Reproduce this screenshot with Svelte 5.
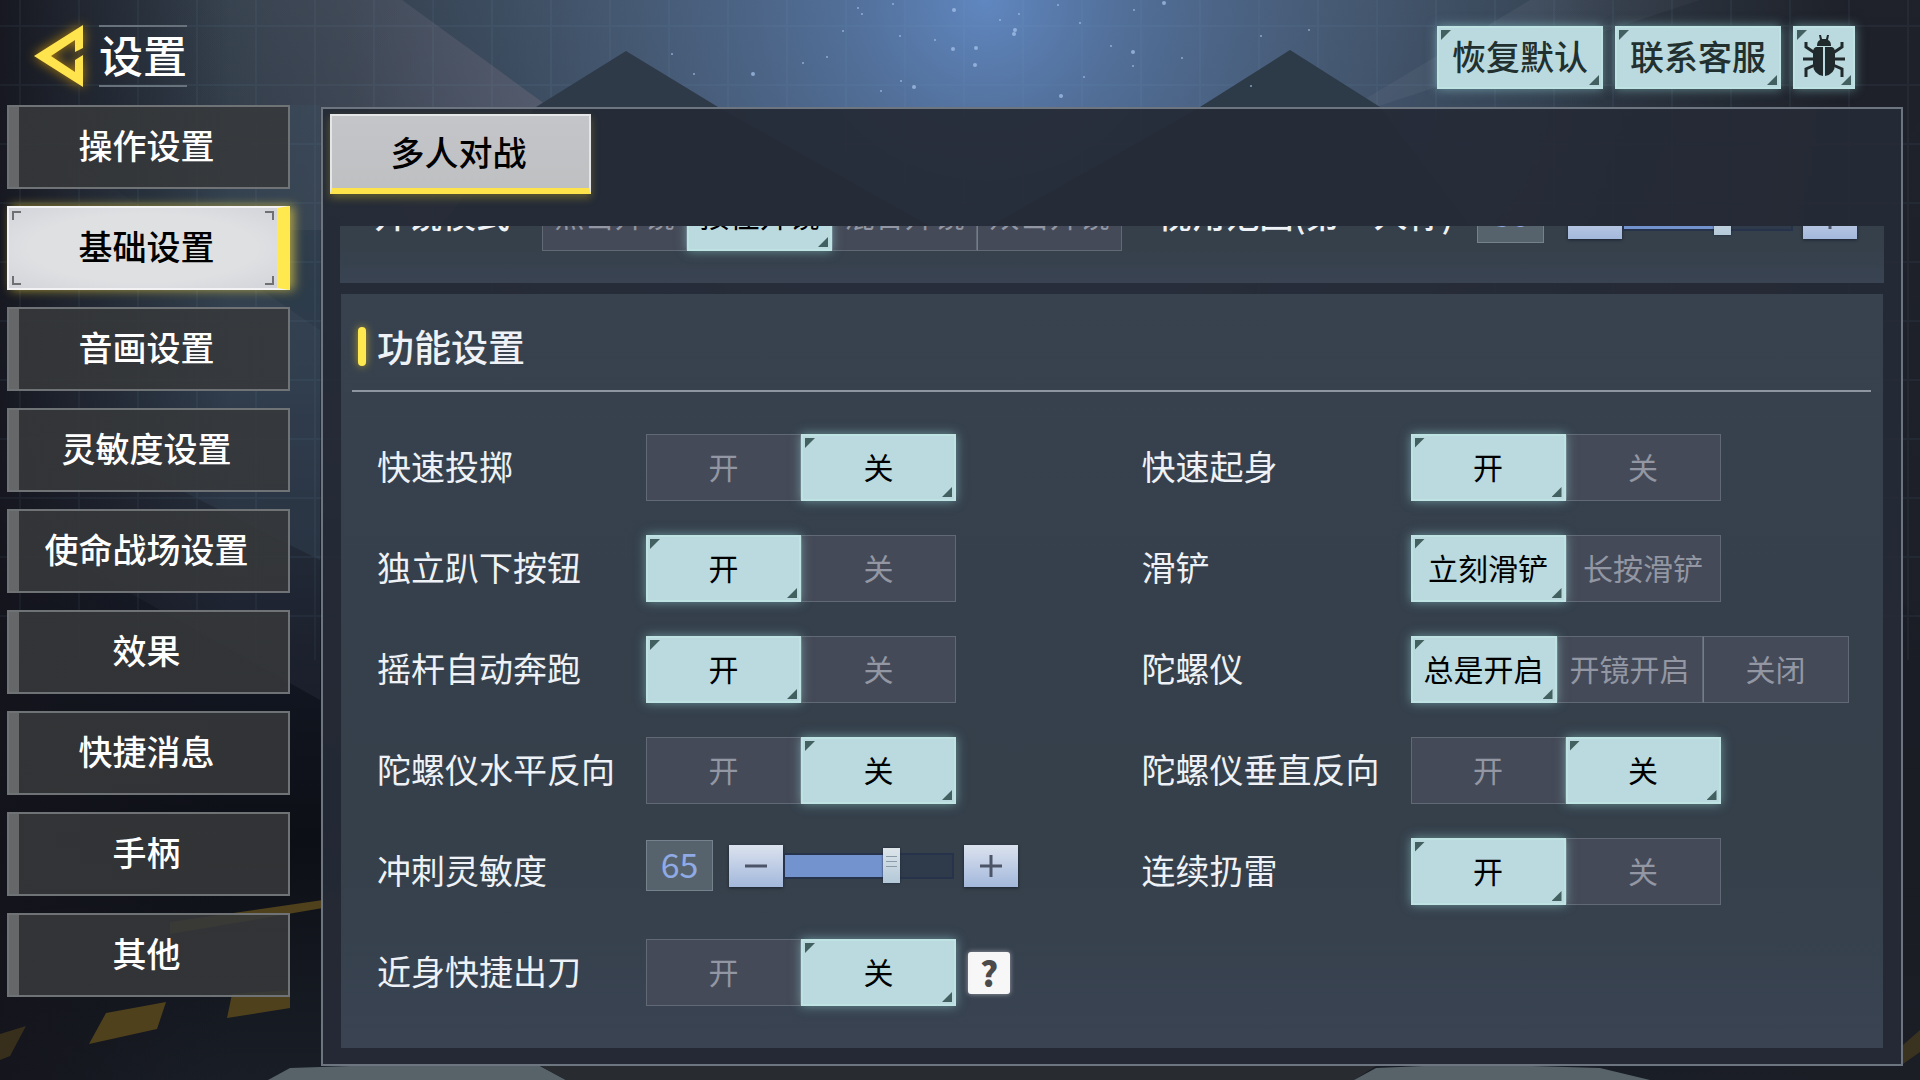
<script>
  const menu = [
    "操作设置",
    "基础设置",
    "音画设置",
    "灵敏度设置",
    "使命战场设置",
    "效果",
    "快捷消息",
    "手柄",
    "其他",
  ];
  let page = $state("基础设置");

  let scope = $state([
    {
      id: "ads-mode",
      label: "开镜模式",
      options: ["点击开镜", "按住开镜", "混合开镜", "双击开镜"],
      value: "按住开镜",
    },
    { id: "fov", label: "视角范围(第一人称)", min: 50, max: 100, value: 80 },
  ]);

  const onOff = ["开", "关"];
  let features = $state([
    { id: "throw", label: "快速投掷", options: onOff, value: "关" },
    { id: "getup", label: "快速起身", options: onOff, value: "开" },
    { id: "prone", label: "独立趴下按钮", options: onOff, value: "开" },
    {
      id: "slide",
      label: "滑铲",
      options: ["立刻滑铲", "长按滑铲"],
      value: "立刻滑铲",
    },
    { id: "autorun", label: "摇杆自动奔跑", options: onOff, value: "开" },
    {
      id: "gyro",
      label: "陀螺仪",
      options: ["总是开启", "开镜开启", "关闭"],
      value: "总是开启",
    },
    { id: "gyro-x", label: "陀螺仪水平反向", options: onOff, value: "关" },
    { id: "gyro-y", label: "陀螺仪垂直反向", options: onOff, value: "关" },
    { id: "sprint", label: "冲刺灵敏度", min: 0, max: 100, value: 65 },
    { id: "grenade", label: "连续扔雷", options: onOff, value: "开" },
    {
      id: "knife",
      label: "近身快捷出刀",
      options: onOff,
      value: "关",
      help: true,
    },
  ]);

  function step(s, d) {
    s.value = Math.min(s.max, Math.max(s.min, s.value + d));
  }

  function ratio(s) {
    return (s.value - s.min) / (s.max - s.min);
  }

  // x, y, radius
  const stars = [
    [954, 10, 2], [862, 14, 1], [900, 36, 1], [1015, 30, 2], [1058, 5, 1],
    [935, 40, 1], [976, 48, 2], [953, 49, 2], [975, 65, 2], [1133, 52, 2],
    [1164, 3, 2], [753, 74, 2], [694, 74, 1], [803, 63, 1], [914, 87, 2],
    [881, 91, 1], [901, 81, 1], [1061, 96, 2], [1014, 34, 2], [1080, 23, 1],
    [1133, 66, 1], [1182, 58, 1], [1251, 86, 1], [1309, 30, 1], [843, 31, 1],
    [827, 57, 1], [893, 4, 1], [1019, 14, 1], [1134, 10, 1], [672, 54, 1],
    [1261, 36, 1], [1084, 77, 1], [1111, 46, 1], [858, 8, 1], [1000, 20, 1],
  ];
  const columns = Array.from({ length: 33 }, (_, i) => 20 + i * 59);
  const lines = [26, 85, 144, 203, 262, 321, 380, 439, 498, 557, 616];
</script>

{#snippet choice(s)}
  <div
    class="choice"
    class:compact={s.options.length > 2}
    role="group"
    aria-labelledby={s.id}
  >
    {#each s.options as o}
      <button
        type="button"
        class:on={s.value === o}
        aria-pressed={s.value === o}
        onclick={() => (s.value = o)}>{o}</button
      >
    {/each}
  </div>
{/snippet}

{#snippet slider(s)}
  <div class="slider">
    <output for="{s.id}-range">{s.value}</output>
    <button type="button" class="step" aria-label="-" onclick={() => step(s, -1)}>
      <svg viewBox="0 0 24 24"><path d="M1 12H23" /></svg>
    </button>
    <input
      id="{s.id}-range"
      type="range"
      min={s.min}
      max={s.max}
      bind:value={s.value}
      aria-labelledby={s.id}
      style="--ratio: {ratio(s)}"
    />
    <button type="button" class="step" aria-label="+" onclick={() => step(s, 1)}>
      <svg viewBox="0 0 24 24"><path d="M1 12H23M12 1V23" /></svg>
    </button>
  </div>
{/snippet}

{#snippet setting(s)}
  <div class="setting" class:ranged={!s.options}>
    <label class="label" id={s.id} for={s.options ? null : `${s.id}-range`}>
      {s.label}
    </label>
    {#if s.options}
      {@render choice(s)}
    {:else}
      {@render slider(s)}
    {/if}
    {#if s.help}
      <button type="button" class="help">?</button>
    {/if}
  </div>
{/snippet}

<div class="screen">
  <svg
    class="backdrop"
    viewBox="0 0 1920 1080"
    preserveAspectRatio="xMidYMin slice"
    aria-hidden="true"
  >
    <defs>
      <linearGradient id="sky" x1="0" y1="0" x2="0" y2="1">
        <stop offset="0" stop-color="#34404d" />
        <stop offset="0.35" stop-color="#26313e" />
        <stop offset="0.6" stop-color="#121722" />
        <stop offset="0.78" stop-color="#0d0f16" />
        <stop offset="1" stop-color="#191e26" />
      </linearGradient>
      <linearGradient id="edges" x1="0" y1="0" x2="1" y2="0">
        <stop offset="0" stop-color="#14141c" stop-opacity="0.9" />
        <stop offset="0.12" stop-color="#14141c" stop-opacity="0" />
        <stop offset="0.8" stop-color="#1c1e26" stop-opacity="0" />
        <stop offset="0.96" stop-color="#1c1e26" stop-opacity="0.9" />
      </linearGradient>
      <linearGradient id="beam" x1="0.3" y1="0" x2="1" y2="0">
        <stop offset="0" stop-color="#6a6878" stop-opacity="0" />
        <stop offset="1" stop-color="#6a6878" stop-opacity="0.5" />
      </linearGradient>
      <radialGradient id="glow" cx="985" cy="0" r="640" gradientUnits="userSpaceOnUse">
        <stop offset="0" stop-color="#6087c0" />
        <stop offset="0.2" stop-color="#5676a4" stop-opacity="0.9" />
        <stop offset="0.6" stop-color="#4f6685" stop-opacity="0.6" />
        <stop offset="1" stop-color="#4b6280" stop-opacity="0" />
      </radialGradient>
    </defs>
    <rect width="1920" height="1080" fill="url(#sky)" />
    <rect width="1920" height="640" fill="url(#glow)" />
    <path d="M0 0H402L560 115V230H0Z" fill="url(#beam)" />
    <path d="M1530 0H1700L1376 107V230L1330 120Z" fill="#6a7488" opacity="0.2" />
    <path d="M0 190L140 105H320V560L0 400Z" fill="#3d5468" opacity="0.25" />
    <path d="M0 110L320 330V700L0 520Z" fill="#5a6170" opacity="0.15" />
    <path d="M1920 120V620L1860 560V200Z" fill="#3d5468" opacity="0.3" />
    <rect width="1920" height="1080" fill="url(#edges)" />
    <g class="mesh">
      {#each columns as x}
        <path d="M{x} 0V660" />
      {/each}
      {#each lines as y}
        <path d="M0 {y}H1920" />
      {/each}
    </g>
    <path d="M536 107L626 51L718 107L930 226H440Z" fill="#2f3a49" />
    <path d="M1200 107L1290 50L1380 107L1470 226H990Z" fill="#2d3a48" />
    {#each stars as [x, y, r]}
      <ellipse cx={x} cy={y} rx={r} ry={r} fill="#a9c6ee" opacity="0.7" />
    {/each}
    <g fill="#4f411c">
      <path d="M170 922L323 900V908L170 934Z" />
      <path d="M89 1044L106 1013L166 1002L157 1029Z" />
      <path d="M227 1018L232 994L290 990V1008Z" />
      <path d="M0 1060V1034L26 1026L10 1056Z" opacity="0.6" />
      <path d="M1903 1045L1920 1030V1052L1903 1064Z" opacity="0.6" />
    </g>
    <path d="M268 1080L290 1068L410 1064L540 1066L566 1080Z" fill="#576269" />
    <path d="M566 1080L540 1066H1376L1354 1080Z" fill="#282c30" />
    <path d="M1354 1080L1376 1068L1470 1064L1600 1068L1650 1080Z" fill="#576269" />
  </svg>

  <header>
    <a class="back" href="#back" aria-label="返回">
      <svg viewBox="0 0 49 62">
        <path d="M0 31L49 0V23L41 27V15L17 31L41 47V35L49 30V62Z" />
      </svg>
    </a>
    <h1>设置</h1>
    <div class="actions">
      <button type="button" class="on">恢复默认</button>
      <button type="button" class="on">联系客服</button>
      <button type="button" class="on bug" aria-label="反馈">
        <svg viewBox="0 0 42 42">
          <path
            d="M14 11Q14 6 17 5L16 0H18L19 4H23L24 0H26L25 5Q28 6 28 11Z"
          />
          <path d="M13 12H20V41Q10 39 10 29V17Q10 13 13 12Z" />
          <path d="M29 12H22V41Q32 39 32 29V17Q32 13 29 12Z" />
          <path
            class="legs"
            d="M3 7V12L12 18M39 7V12L30 18M0 24H12M30 24H42M12 30L3 34V42M30 30L39 34V42"
          />
        </svg>
      </button>
    </div>
  </header>

  <div class="body">
    <nav>
      {#each menu as item}
        <button
          type="button"
          class:active={page === item}
          onclick={() => (page = item)}>{item}</button
        >
      {/each}
    </nav>

    <main>
      <div class="tabs">
        <button type="button">多人对战</button>
      </div>
      <div class="scroller">
        <section class="card previous">
          <div class="settings">
            {#each scope as s}
              {@render setting(s)}
            {/each}
          </div>
        </section>
        <section class="card">
          <h2>功能设置</h2>
          <div class="settings">
            {#each features as s}
              {@render setting(s)}
            {/each}
          </div>
        </section>
      </div>
    </main>
  </div>
</div>

<style>
  :global(*, *::before, *::after) {
    box-sizing: border-box;
  }

  :global(body) {
    background: #14171f;
    color: #eef1f5;
    font-family: "Noto Sans CJK SC", sans-serif;
    font-size: 34px;
  }

  button {
    margin: 0;
    padding: 0 0 4px;
    border: none;
    border-radius: 0;
    color: inherit;
    font: inherit;
    line-height: 48px;
    white-space: nowrap;
    cursor: pointer;
  }

  .screen {
    position: relative;
    display: flex;
    flex-direction: column;
    min-height: 100vh;
    overflow: hidden;
  }

  .backdrop {
    position: absolute;
    inset: 0;
    z-index: -1;
    width: 100%;
    height: 100%;
  }

  .mesh {
    fill: none;
    stroke: #7fb0cc;
    stroke-width: 2;
    opacity: 0.06;
  }

  header {
    display: flex;
    align-items: center;
    height: 105px;
    padding: 6px 65px 0 34px;
  }

  .back svg {
    display: block;
    width: 49px;
    height: 62px;
    fill: #ffe44d;
    filter: drop-shadow(0 0 6px #b8860b);
  }

  h1 {
    margin: 0 0 0 16px;
    padding-bottom: 4px;
    border: solid #68727c;
    border-width: 2px 0;
    color: #fff;
    font-size: 44px;
    font-weight: 500;
    line-height: 54px;
  }

  .actions {
    display: flex;
    gap: 12px;
    margin-left: auto;
    padding-top: 4px;
  }

  .actions button {
    width: 166px;
    height: 63px;
    color: #22302f;
    font-weight: 500;
  }

  .actions .bug {
    width: 62px;
  }

  .bug svg {
    display: block;
    width: 42px;
    height: 42px;
    margin: 0 auto;
    fill: #20292b;
  }

  .legs {
    fill: none;
    stroke: #20292b;
    stroke-width: 3;
  }

  /* lit button, shared by the header actions and the choices */
  .on {
    position: relative;
    z-index: 1;
    background: #badadf;
    box-shadow:
      inset 0 0 0 2px #bfe3e3,
      0 0 10px rgba(150, 215, 215, 0.55);
  }

  .on::before,
  .on::after {
    content: "";
    position: absolute;
    width: 10px;
    height: 10px;
    background: #41605f;
  }

  .on::before {
    top: 4px;
    left: 4px;
    clip-path: polygon(0 0, 100% 0, 0 100%);
  }

  .on::after {
    right: 4px;
    bottom: 4px;
    clip-path: polygon(100% 0, 100% 100%, 0 100%);
  }

  .body {
    flex: 1;
    display: flex;
    align-items: flex-start;
    gap: 31px;
    padding: 0 17px 14px 7px;
  }

  nav {
    display: flex;
    flex-direction: column;
    gap: 17px;
    width: 283px;
  }

  nav button {
    height: 84px;
    border: 2px solid #707375;
    padding-right: 4px;
    background: linear-gradient(90deg, #656769 10px, rgba(54, 56, 58, 0.88) 10px);
    color: #fff;
    font-weight: 500;
  }

  nav .active {
    position: relative;
    border-color: #f2f2f4;
    border-right: 13px solid #ffe94f;
    padding-left: 7px;
    padding-right: 0;
    background: radial-gradient(#dfe0e2 60%, #d3d4da);
    box-shadow: 4px 0 10px rgba(255, 225, 60, 0.6);
    color: #000;
  }

  nav .active::before {
    --mark: linear-gradient(#6f7072, #6f7072);
    content: "";
    position: absolute;
    inset: 3px;
    background:
      var(--mark) 0 0 / 9px 2px,
      var(--mark) 0 0 / 2px 9px,
      var(--mark) 100% 0 / 9px 2px,
      var(--mark) 100% 0 / 2px 9px,
      var(--mark) 0 100% / 9px 2px,
      var(--mark) 0 100% / 2px 9px,
      var(--mark) 100% 100% / 9px 2px,
      var(--mark) 100% 100% / 2px 9px;
    background-repeat: no-repeat;
  }

  main {
    flex: 1;
    min-width: 0;
    margin-top: 2px;
    border: 2px solid #6d7580;
    background: rgba(37, 43, 54, 0.94);
  }

  .tabs {
    display: flex;
    padding: 5px 7px 32px;
  }

  .tabs button {
    width: 261px;
    height: 80px;
    border: 2px solid #e4e5e7;
    border-bottom: 6px solid #ffe34a;
    padding-right: 4px;
    padding-bottom: 0;
    background: linear-gradient(#c4c5c9, #bfc0c2);
    box-shadow: 0 4px 8px rgba(180, 160, 40, 0.4);
    color: #000;
    font-weight: 500;
  }

  .scroller {
    display: flex;
    flex-direction: column;
    gap: 11px;
    padding: 0 18px 16px;
    overflow: hidden;
  }

  .card {
    background: linear-gradient(#38424f, #35404c 40%, #35404b 75%, #394352);
  }

  .previous {
    margin: -90px -1px 0;
    padding-top: 6px;
  }

  h2 {
    display: flex;
    align-items: center;
    gap: 11px;
    margin: 0 12px 0 11px;
    padding: 28px 6px 20px;
    border-bottom: 2px solid #8d96a1;
    font-size: 37px;
    font-weight: 500;
    line-height: 48px;
  }

  h2::before {
    content: "";
    width: 8px;
    height: 39px;
    background: #ffe94f;
    border-radius: 4px;
    box-shadow: 0 0 8px rgba(255, 215, 40, 0.6);
  }

  .settings {
    display: grid;
    grid-template-columns: 764fr 728fr;
    row-gap: 34px;
    padding: 42px 13px 42px 36px;
  }

  .previous .settings {
    grid-template-columns: 784fr 727fr;
    padding: 42px 0 32px 34px;
  }

  .setting {
    display: flex;
    align-items: center;
    height: 67px;
  }

  .label {
    flex: none;
    width: 269px;
    padding-bottom: 4px;
    line-height: 48px;
    white-space: nowrap;
  }

  .previous .label {
    width: 168px;
    padding-bottom: 8px;
    font-weight: 500;
  }

  .previous .ranged .label {
    width: 320px;
  }

  .choice {
    display: flex;
    height: 67px;
    font-size: 30px;
  }

  .choice button {
    width: 155px;
    color: #9297a3;
  }

  .choice.compact button {
    width: 146px;
  }

  .previous .choice.compact button {
    width: 145px;
    padding-bottom: 8px;
  }

  .choice button:not(.on) {
    border: 1px solid #626976;
    background: #454a58;
  }

  .choice button:not(.on) + button:not(.on) {
    border-left-color: #777d88;
  }

  .choice .on,
  .previous .choice .on {
    color: #000;
  }

  .slider {
    display: flex;
    align-items: center;
  }

  .card:not(.previous) .slider {
    align-self: flex-start;
    padding-top: 2px;
  }

  output {
    width: 67px;
    height: 51px;
    margin-right: 16px;
    border: 1px solid #75818c;
    background: #56636d;
    color: #90aae6;
    line-height: 46px;
    text-align: center;
  }

  .previous output {
    margin-right: 24px;
    line-height: 40px;
  }

  .step {
    width: 54px;
    height: 42px;
    padding: 0;
    background: linear-gradient(#dbe2ee, #a3b8dc);
    box-shadow: 0 1px 3px rgba(10, 15, 30, 0.6);
  }

  .step svg {
    display: block;
    width: 24px;
    height: 24px;
    margin: 0 auto;
    fill: none;
    stroke: #4c5468;
    stroke-width: 3;
  }

  input[type="range"] {
    appearance: none;
    width: 171px;
    height: 35px;
    margin: 0 10px 0 0;
    background: none;
  }

  input::-webkit-slider-runnable-track {
    --fill: calc(var(--ratio) * (100% - 17px) + 8px);
    height: 26px;
    border: 2px solid #27334a;
    background: linear-gradient(90deg, #7393ce var(--fill), #2f3b4b var(--fill));
  }

  input::-webkit-slider-thumb {
    appearance: none;
    width: 17px;
    height: 35px;
    margin-top: -7px;
    background:
      linear-gradient(#8b9aa8, #8b9aa8) 50% 8px / 11px 1px no-repeat,
      linear-gradient(#8b9aa8, #8b9aa8) 50% 13px / 11px 1px no-repeat,
      linear-gradient(#8b9aa8, #8b9aa8) 50% 18px / 11px 1px no-repeat,
      linear-gradient(#dde5ea, #b3c8d8);
    box-shadow: 0 0 2px #1d2838;
  }

  .help {
    width: 42px;
    height: 42px;
    margin-left: 12px;
    padding: 0;
    border-radius: 3px;
    background: #f7f7f7;
    box-shadow: 0 0 5px rgba(255, 255, 255, 0.5);
    color: #4b4b4b;
    font-weight: 900;
    line-height: 42px;
  }
</style>
